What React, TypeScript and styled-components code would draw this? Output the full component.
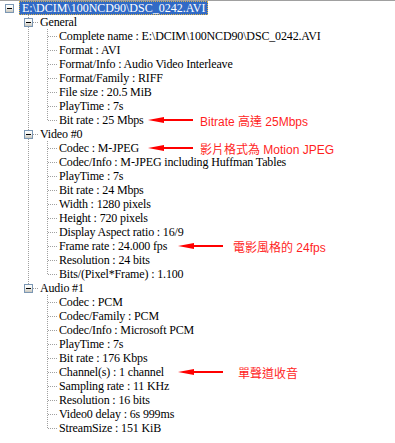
import React from 'react'
import styled, { createGlobalStyle, css } from 'styled-components'

const LINE = '#a0a0a0'

const GlobalStyle = createGlobalStyle`
  body {
    margin: 0;
    background: #fff;
  }
`

type NoteSpec = { left: number; gap: number; text: string }
type TreeNode = { label: string; note?: NoteSpec; children?: TreeNode[] }

const leaf = (label: string, note?: NoteSpec): TreeNode => ({ label, note })

const data: TreeNode = {
  label: 'E:\\DCIM\\100NCD90\\DSC_0242.AVI',
  children: [
    {
      label: 'General',
      children: [
        leaf('Complete name : E:\\DCIM\\100NCD90\\DSC_0242.AVI'),
        leaf('Format : AVI'),
        leaf('Format/Info : Audio Video Interleave'),
        leaf('Format/Family : RIFF'),
        leaf('File size : 20.5 MiB'),
        leaf('PlayTime : 7s'),
        leaf('Bit rate : 25 Mbps', { left: 148, gap: 7, text: 'Bitrate 高達 25Mbps' }),
      ],
    },
    {
      label: 'Video #0',
      children: [
        leaf('Codec : M-JPEG', { left: 148, gap: 7, text: '影片格式為 Motion JPEG' }),
        leaf('Codec/Info : M-JPEG including Huffman Tables'),
        leaf('PlayTime : 7s'),
        leaf('Bit rate : 24 Mbps'),
        leaf('Width : 1280 pixels'),
        leaf('Height : 720 pixels'),
        leaf('Display Aspect ratio : 16/9'),
        leaf('Frame rate : 24.000 fps', { left: 178, gap: 10, text: '電影風格的 24fps' }),
        leaf('Resolution : 24 bits'),
        leaf('Bits/(Pixel*Frame) : 1.100'),
      ],
    },
    {
      label: 'Audio #1',
      children: [
        leaf('Codec : PCM'),
        leaf('Codec/Family : PCM'),
        leaf('Codec/Info : Microsoft PCM'),
        leaf('PlayTime : 7s'),
        leaf('Bit rate : 176 Kbps'),
        leaf('Channel(s) : 1 channel', { left: 178, gap: 15, text: '單聲道收音' }),
        leaf('Sampling rate : 11 KHz'),
        leaf('Resolution : 16 bits'),
        leaf('Video0 delay : 6s 999ms'),
        leaf('StreamSize : 151 KiB'),
      ],
    },
  ],
}

const Tree = styled.ul`
  margin: 0;
  padding: 0;
  list-style: none;
  width: 395px;
  height: 442px;
  border-top: 1px solid #a0a0a0;
  background: #fff;
  font-family: 'Liberation Serif', 'Noto Sans CJK TC', serif;
  font-size: 12px;
  letter-spacing: -0.15px;
  color: #000;
  overflow: hidden;
`

const Row = styled.li`
  position: relative;
  display: flex;
  align-items: center;
  height: 14px;
`

// one indent column, with the sibling line of an ancestor running through it
const Guide = styled.span<{ $line: boolean }>`
  flex: none;
  width: 19px;
  height: 14px;
  ${(p) =>
    p.$line &&
    css`
      background: linear-gradient(${LINE} 50%, transparent 50%) 9px 0 / 1px 2px repeat-y;
    `}
`

const Connector = styled.span<{ $up: boolean; $down: boolean; $stub: boolean }>`
  position: relative;
  flex: none;
  width: 19px;
  height: 14px;

  &::before {
    content: '';
    display: ${(p) => (p.$up || p.$down ? 'block' : 'none')};
    position: absolute;
    left: 9px;
    width: 1px;
    top: ${(p) => (p.$up ? 0 : 7)}px;
    bottom: ${(p) => (p.$down ? 0 : 7)}px;
    background: linear-gradient(${LINE} 50%, transparent 50%) 0 0 / 1px 2px;
  }

  &::after {
    content: '';
    display: ${(p) => (p.$stub ? 'block' : 'none')};
    position: absolute;
    left: 10px;
    right: 0;
    top: 7px;
    height: 1px;
    background: linear-gradient(to right, ${LINE} 50%, transparent 50%) 0 0 / 2px 1px;
  }
`

const Toggle = styled.span`
  position: absolute;
  z-index: 1;
  left: 5px;
  top: 3px;
  width: 7px;
  height: 7px;
  border: 1px solid #7b97b4;
  background: linear-gradient(#fff 0%, #f4f3ee 45%, #c8c6bd 100%);

  &::after {
    content: '';
    position: absolute;
    left: 1px;
    top: 3px;
    width: 5px;
    height: 1px;
    background: #000;
  }
`

const Label = styled.span<{ $selected?: boolean }>`
  padding: 0 2px;
  height: 14px;
  line-height: 14px;
  white-space: nowrap;
  ${(p) =>
    p.$selected &&
    css`
      box-sizing: border-box;
      background: #316ac5;
      color: #fff;
      border: 1px dotted #d9b24c;
      line-height: 12px;
      padding: 0 2px;
      letter-spacing: 0;
    `}
`

const Note = styled.span<{ $left: number; $gap: number }>`
  position: absolute;
  left: ${(p) => p.$left}px;
  top: 0;
  height: 14px;
  display: flex;
  align-items: center;
  gap: ${(p) => p.$gap}px;
  font-family: 'Liberation Sans', 'Noto Sans CJK TC', sans-serif;
  font-size: 12px;
  letter-spacing: 0;
  color: #ff1f1f;
  white-space: nowrap;
`

const Arrow = () => (
  <svg width="45" height="8" viewBox="0 0 45 8">
    <polygon points="0,4 16,1 16,7" fill="#ff0000" />
    <rect x="14" y="3" width="31" height="2" fill="#ff0000" />
  </svg>
)

const renderNode = (
  node: TreeNode,
  guides: boolean[],
  isRoot: boolean,
  isLast: boolean,
  key: string,
): React.ReactNode[] => {
  const rows: React.ReactNode[] = [
    <Row key={key}>
      {guides.map((g, i) => (
        <Guide key={i} $line={g} />
      ))}
      <Connector $up={!isRoot} $down={!isRoot && !isLast} $stub={!isRoot}>
        {node.children && <Toggle />}
      </Connector>
      <Label $selected={isRoot}>{node.label}</Label>
      {node.note && (
        <Note $left={node.note.left} $gap={node.note.gap}>
          <Arrow />
          <span>{node.note.text}</span>
        </Note>
      )}
    </Row>,
  ]
  const kids = node.children ?? []
  kids.forEach((child, i) => {
    rows.push(...renderNode(child, [...guides, !isLast], false, i === kids.length - 1, `${key}-${i}`))
  })
  return rows
}

export default function App() {
  return (
    <>
      <GlobalStyle />
      <Tree>{renderNode(data, [], true, true, 'r')}</Tree>
    </>
  )
}
